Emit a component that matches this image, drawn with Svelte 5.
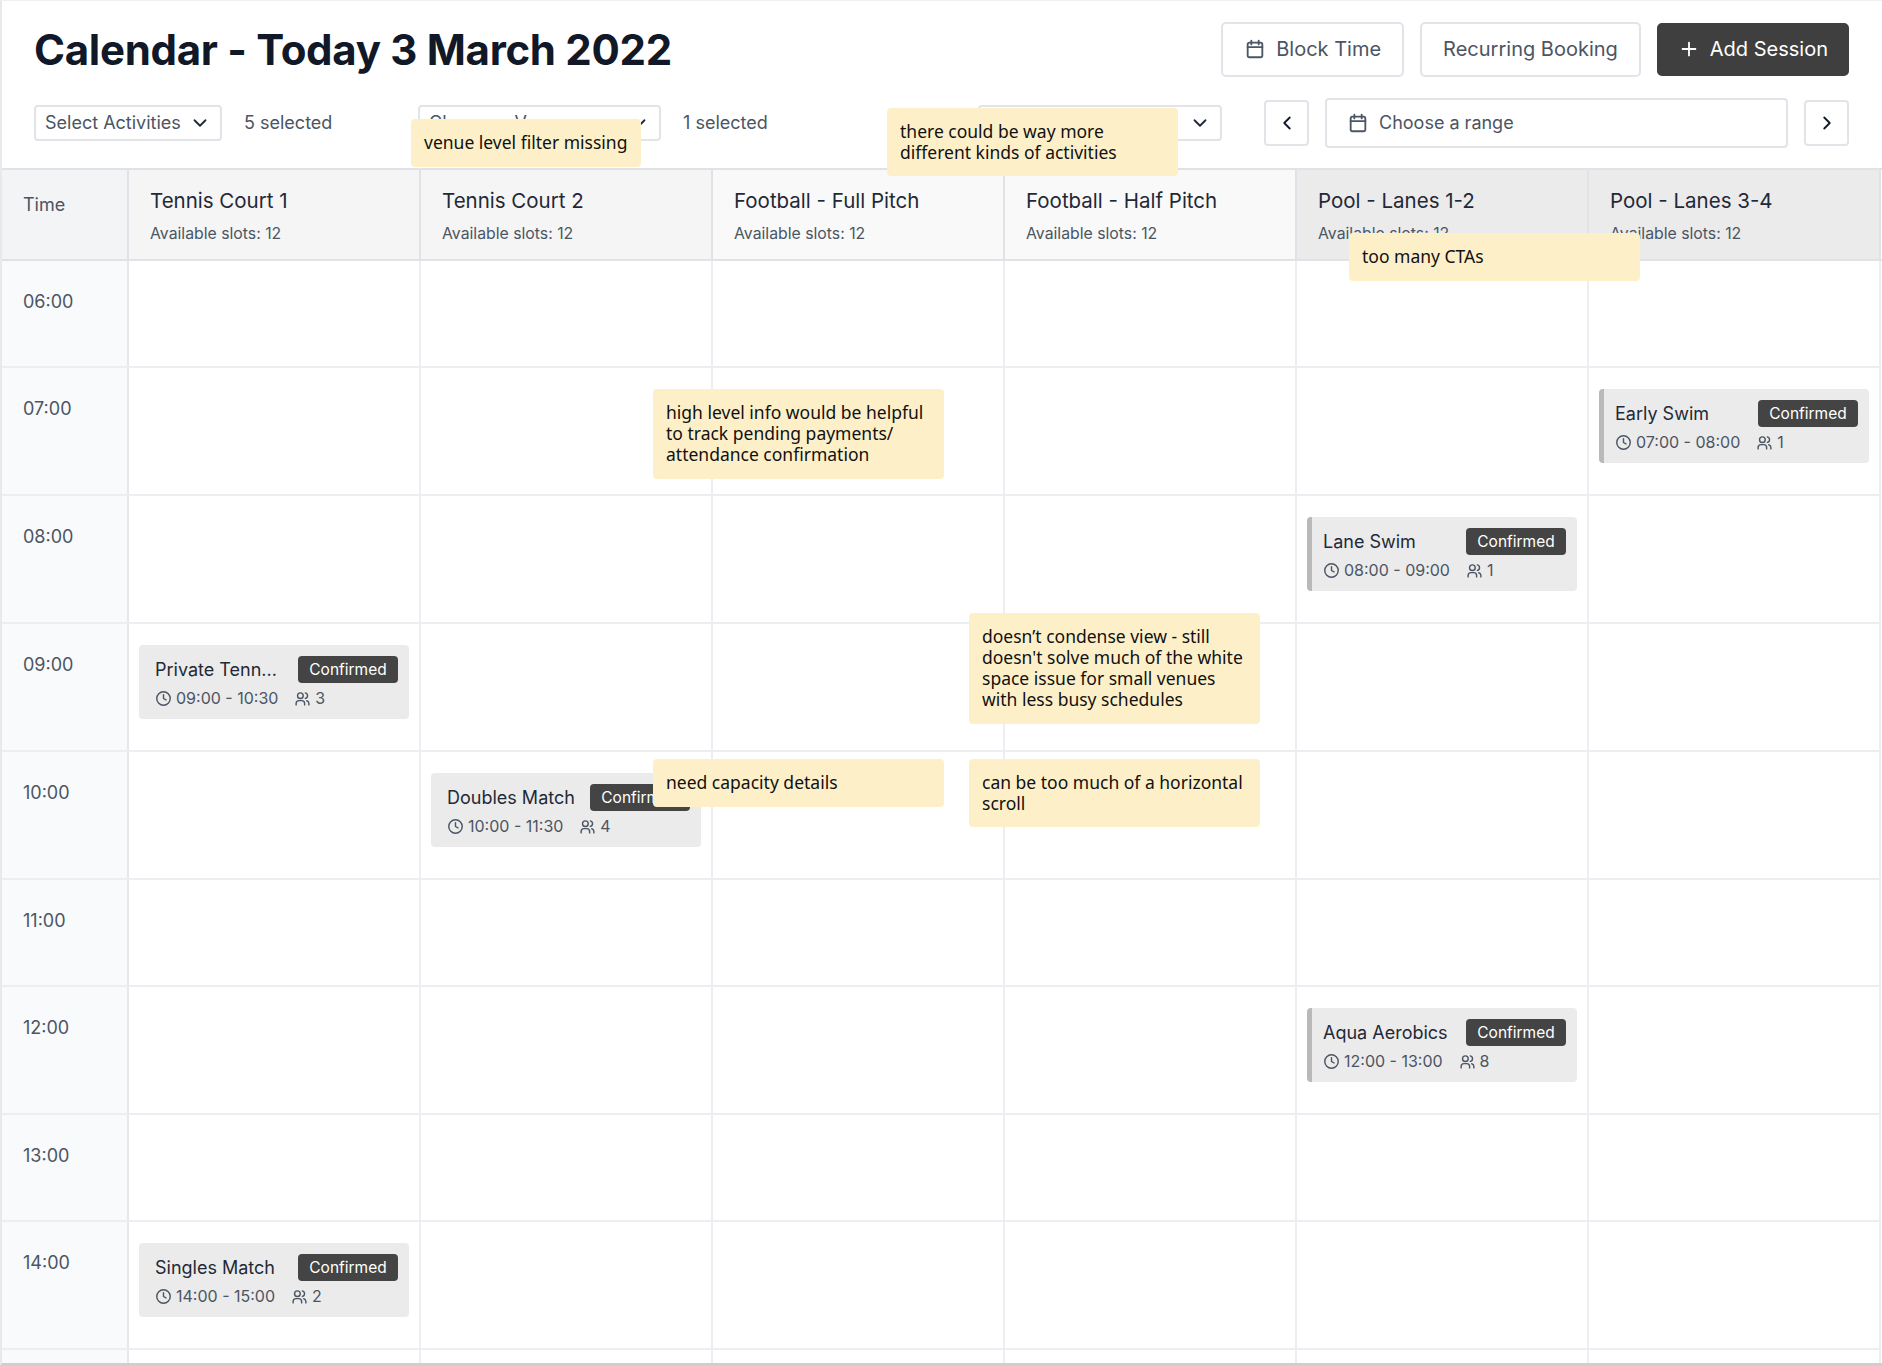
<script lang="ts">
  type Booking = { title: string; time: string; people: number; muted?: boolean };

  const columns = [
    { name: 'Tennis Court 1', tone: 'tennis' },
    { name: 'Tennis Court 2', tone: 'tennis' },
    { name: 'Football - Full Pitch', tone: 'football' },
    { name: 'Football - Half Pitch', tone: 'football' },
    { name: 'Pool - Lanes 1-2', tone: 'pool' },
    { name: 'Pool - Lanes 3-4', tone: 'pool' }
  ];

  const hours = ['06:00', '07:00', '08:00', '09:00', '10:00', '11:00', '12:00', '13:00', '14:00', ''];

  const bookings: Record<string, Booking> = {
    '07:00-5': { title: 'Early Swim', time: '07:00 - 08:00', people: 1 },
    '08:00-4': { title: 'Lane Swim', time: '08:00 - 09:00', people: 1 },
    '09:00-0': { title: 'Private Tenn...', time: '09:00 - 10:30', people: 3, muted: true },
    '10:00-1': { title: 'Doubles Match', time: '10:00 - 11:30', people: 4, muted: true },
    '12:00-4': { title: 'Aqua Aerobics', time: '12:00 - 13:00', people: 8 },
    '14:00-0': { title: 'Singles Match', time: '14:00 - 15:00', people: 2, muted: true }
  };

  const notes = [
    { text: 'venue level filter missing', cls: 'n-venue' },
    { text: 'there could be way more\ndifferent kinds of activities', cls: 'n-kinds' },
    { text: 'too many CTAs', cls: 'n-ctas' },
    { text: 'high level info would be helpful\nto track pending payments/\nattendance confirmation', cls: 'n-info' },
    { text: 'doesn’t condense view - still\ndoesn\'t solve much of the white\nspace issue for small venues\nwith less busy schedules', cls: 'n-condense' },
    { text: 'need capacity details', cls: 'n-capacity' },
    { text: 'can be too much of a horizontal\nscroll', cls: 'n-scroll' }
  ];
</script>

{#snippet calendarIcon()}
  <svg class="icon" viewBox="0 0 24 24" aria-hidden="true">
    <rect x="4" y="5" width="16" height="16" rx="2" />
    <path d="M8 3v4M16 3v4M4 10h16" />
  </svg>
{/snippet}

{#snippet chevronDown()}
  <svg class="icon chev" viewBox="0 0 24 24" aria-hidden="true"><path d="M6 9l6 6 6-6" /></svg>
{/snippet}

<div class="page">
  <header class="top">
    <h1>Calendar - Today 3 March 2022</h1>
    <div class="actions">
      <button type="button" class="btn">{@render calendarIcon()} Block Time</button>
      <button type="button" class="btn">Recurring Booking</button>
      <button type="button" class="btn primary">
        <svg class="icon" viewBox="0 0 24 24" aria-hidden="true"><path d="M12 5v14M5 12h14" /></svg>
        Add Session
      </button>
    </div>
  </header>

  <div class="filters">
    <div class="filter one">
      <button type="button" class="select">Select Activities {@render chevronDown()}</button>
      <span class="count">5 selected</span>
    </div>
    <div class="filter two">
      <button type="button" class="select">Choose a Venue {@render chevronDown()}</button>
      <span class="count">1 selected</span>
    </div>
    <button type="button" class="select third" aria-label="Activity type">{@render chevronDown()}</button>
    <div class="range">
      <button type="button" class="nav" aria-label="Previous">
        <svg class="icon" viewBox="0 0 24 24" aria-hidden="true"><path d="M15 6l-6 6 6 6" /></svg>
      </button>
      <button type="button" class="range-input">{@render calendarIcon()} Choose a range</button>
      <button type="button" class="nav" aria-label="Next">
        <svg class="icon" viewBox="0 0 24 24" aria-hidden="true"><path d="M9 6l6 6-6 6" /></svg>
      </button>
    </div>
  </div>

  <div class="calendar">
    <div class="row head">
      <div class="time-head">Time</div>
      {#each columns as col}
        <div class="col-head {col.tone}">
          <div class="col-name">{col.name}</div>
          <div class="slots">Available slots: 12</div>
        </div>
      {/each}
    </div>

    {#each hours as hour}
      <div class="row">
        <div class="time-cell">{hour}</div>
        {#each columns as _, i}
          {@const booking = bookings[`${hour}-${i}`]}
          <div class="cell">
            {#if booking}
              <article class="booking" class:muted={booking.muted}>
                <div class="booking-top">
                  <span class="booking-title">{booking.title}</span>
                  <span class="badge">Confirmed</span>
                </div>
                <div class="booking-meta">
                  <span class="meta-item">
                    <svg class="icon small" viewBox="0 0 24 24" aria-hidden="true">
                      <circle cx="12" cy="12" r="9.5" />
                      <path d="M12 6.5V12l3.5 2" />
                    </svg>
                    {booking.time}
                  </span>
                  <span class="meta-item">
                    <svg class="icon small" viewBox="0 0 24 24" aria-hidden="true">
                      <circle cx="9" cy="8" r="4" />
                      <path d="M3 21v-2a4 4 0 0 1 4-4h4a4 4 0 0 1 4 4v2M16 4.1a4 4 0 0 1 0 7.8M21 21v-2a4 4 0 0 0-3-3.9" />
                    </svg>
                    {booking.people}
                  </span>
                </div>
              </article>
            {/if}
          </div>
        {/each}
      </div>
    {/each}
  </div>

  {#each notes as note}
    <div class="note {note.cls}">{note.text}</div>
  {/each}
</div>

<style>
  :global(body) {
    margin: 0;
    background: #fff;
  }

  .page {
    position: relative;
    box-sizing: border-box;
    width: 1882px;
    height: 1366px;
    overflow: hidden;
    border-top: 1px solid #f0f0f0;
    border-left: 2px solid #e9e9e9;
    border-bottom: 3px solid #cfcfcf;
    font-family: Inter, "Liberation Sans", sans-serif;
    color: #111827;
    background: #fff;
  }

  .top {
    display: flex;
    justify-content: space-between;
    align-items: center;
    height: 76px;
    padding: 20px 33px 0 32px;
    box-sizing: border-box;
  }

  h1 {
    margin: 0;
    padding-top: 2px;
    font-size: 42px;
    line-height: 56px;
    font-weight: 700;
    letter-spacing: -0.3px;
    color: #111827;
  }

  .actions {
    display: flex;
    gap: 16px;
    align-items: center;
  }

  button {
    font-family: inherit;
    cursor: pointer;
  }

  .btn {
    display: flex;
    align-items: center;
    gap: 10px;
    height: 55px;
    padding: 0 21px;
    background: #fff;
    border: 2px solid #e2e4ea;
    border-radius: 5px;
    font-size: 20px;
    color: #4b5563;
  }

  .btn.primary {
    height: 53px;
    padding: 0 19px;
    background: #3f3f3f;
    border-color: #3f3f3f;
    color: #fff;
  }

  .icon {
    width: 22px;
    height: 22px;
    flex: none;
    fill: none;
    stroke: currentColor;
    stroke-width: 2;
    stroke-linecap: round;
    stroke-linejoin: round;
  }

  .icon.small {
    width: 17px;
    height: 17px;
  }

  .filters {
    display: flex;
    align-items: center;
    height: 91px;
    padding: 0 33px 0 32px;
    box-sizing: border-box;
  }

  .filter {
    display: flex;
    align-items: center;
    gap: 22px;
  }

  .filter.one {
    width: 384px;
  }

  .filter.two {
    width: 560px;
  }

  .select {
    display: flex;
    align-items: center;
    justify-content: space-between;
    height: 36px;
    padding: 0 9px;
    background: #fff;
    border: 2px solid #e2e4ea;
    border-radius: 4px;
    font-size: 18px;
    color: #4b5563;
  }

  .select .chev {
    color: #1f2937;
  }

  .filter.one .select {
    width: 188px;
  }

  .filter.two .select {
    width: 243px;
  }

  .select.third {
    width: 244px;
    justify-content: flex-end;
  }

  .count {
    font-size: 18px;
    color: #4b5563;
  }

  .range {
    display: flex;
    align-items: center;
    gap: 16px;
    margin-left: auto;
  }

  .nav {
    display: flex;
    align-items: center;
    justify-content: center;
    width: 45px;
    height: 46px;
    padding: 0;
    background: #fff;
    border: 2px solid #e2e4ea;
    border-radius: 4px;
    color: #111827;
  }

  .range-input {
    display: flex;
    align-items: center;
    gap: 10px;
    width: 463px;
    height: 50px;
    padding: 0 20px;
    background: #fff;
    border: 2px solid #e2e4ea;
    border-radius: 4px;
    font-size: 18px;
    color: #4b5563;
  }

  .calendar {
    border-top: 2px solid #e0e2e8;
  }

  .row {
    display: grid;
    grid-template-columns: 127px repeat(6, 292px);
  }

  .head {
    height: 91px;
    box-sizing: border-box;
    border-bottom: 2px solid #e0e2e8;
  }

  .time-head {
    padding: 24px 0 0 21px;
    font-size: 18px;
    background: #f3f4f6;
    color: #4b5563;
    border-right: 2px solid #e0e2e8;
  }

  .col-head {
    box-sizing: border-box;
    padding: 18px 20px 0 21px;
    border-right: 2px solid #e0e2e8;
  }

  .col-head.tennis {
    background: #f5f5f6;
  }

  .col-head.football {
    background: #f9f9f9;
  }

  .col-head.pool {
    background: #ebebeb;
  }

  .col-name {
    font-size: 20.5px;
    line-height: 26px;
    color: #1f2937;
  }

  .slots {
    margin-top: 10px;
    font-size: 15.8px;
    line-height: 20px;
    color: #4b5563;
  }

  .time-cell {
    padding: 28px 0 0 21px;
    font-size: 18px;
    line-height: 26px;
    color: #4b5563;
    background: #f9fafb;
    border-right: 2px solid #e5e7eb;
    border-bottom: 2px solid #eceef2;
  }

  .cell {
    box-sizing: border-box;
    min-height: 107px;
    padding: 21px 10px 31px 10px;
    border-right: 2px solid #eceef2;
    border-bottom: 2px solid #eceef2;
  }

  .booking {
    box-sizing: border-box;
    height: 74px;
    padding: 11px 11px 0 11px;
    background: #ebebeb;
    border-left: 5px solid #b9b9b9;
    border-radius: 4px;
  }

  .booking.muted {
    border-left-color: #ebebeb;
  }

  .booking-top {
    display: flex;
    justify-content: space-between;
    align-items: center;
    height: 27px;
  }

  .booking-title {
    font-size: 18px;
    color: #1f2937;
    white-space: nowrap;
  }

  .badge {
    display: flex;
    align-items: center;
    justify-content: center;
    width: 100px;
    height: 27px;
    background: #444;
    border-radius: 4px;
    color: #fff;
    font-size: 15.5px;
  }

  .booking-meta {
    display: flex;
    gap: 16px;
    margin-top: 5px;
    font-size: 16px;
    color: #4b5563;
  }

  .meta-item {
    display: flex;
    align-items: center;
    gap: 4px;
  }

  .note {
    position: absolute;
    box-sizing: border-box;
    padding: 13px 13px;
    background: #fdf0c9;
    border-radius: 4px;
    font-family: "Noto Sans", "Open Sans", sans-serif;
    font-size: 17.5px;
    line-height: 21px;
    color: #111;
    white-space: pre;
  }

  .n-venue { left: 409px; top: 118px; width: 230px; height: 48px; }
  .n-kinds { left: 885px; top: 107px; width: 291px; height: 68px; }
  .n-ctas { left: 1347px; top: 232px; width: 291px; height: 48px; }
  .n-info { left: 651px; top: 388px; width: 291px; height: 90px; }
  .n-condense { left: 967px; top: 612px; width: 291px; height: 111px; }
  .n-capacity { left: 651px; top: 758px; width: 291px; height: 48px; }
  .n-scroll { left: 967px; top: 758px; width: 291px; height: 68px; }
</style>
